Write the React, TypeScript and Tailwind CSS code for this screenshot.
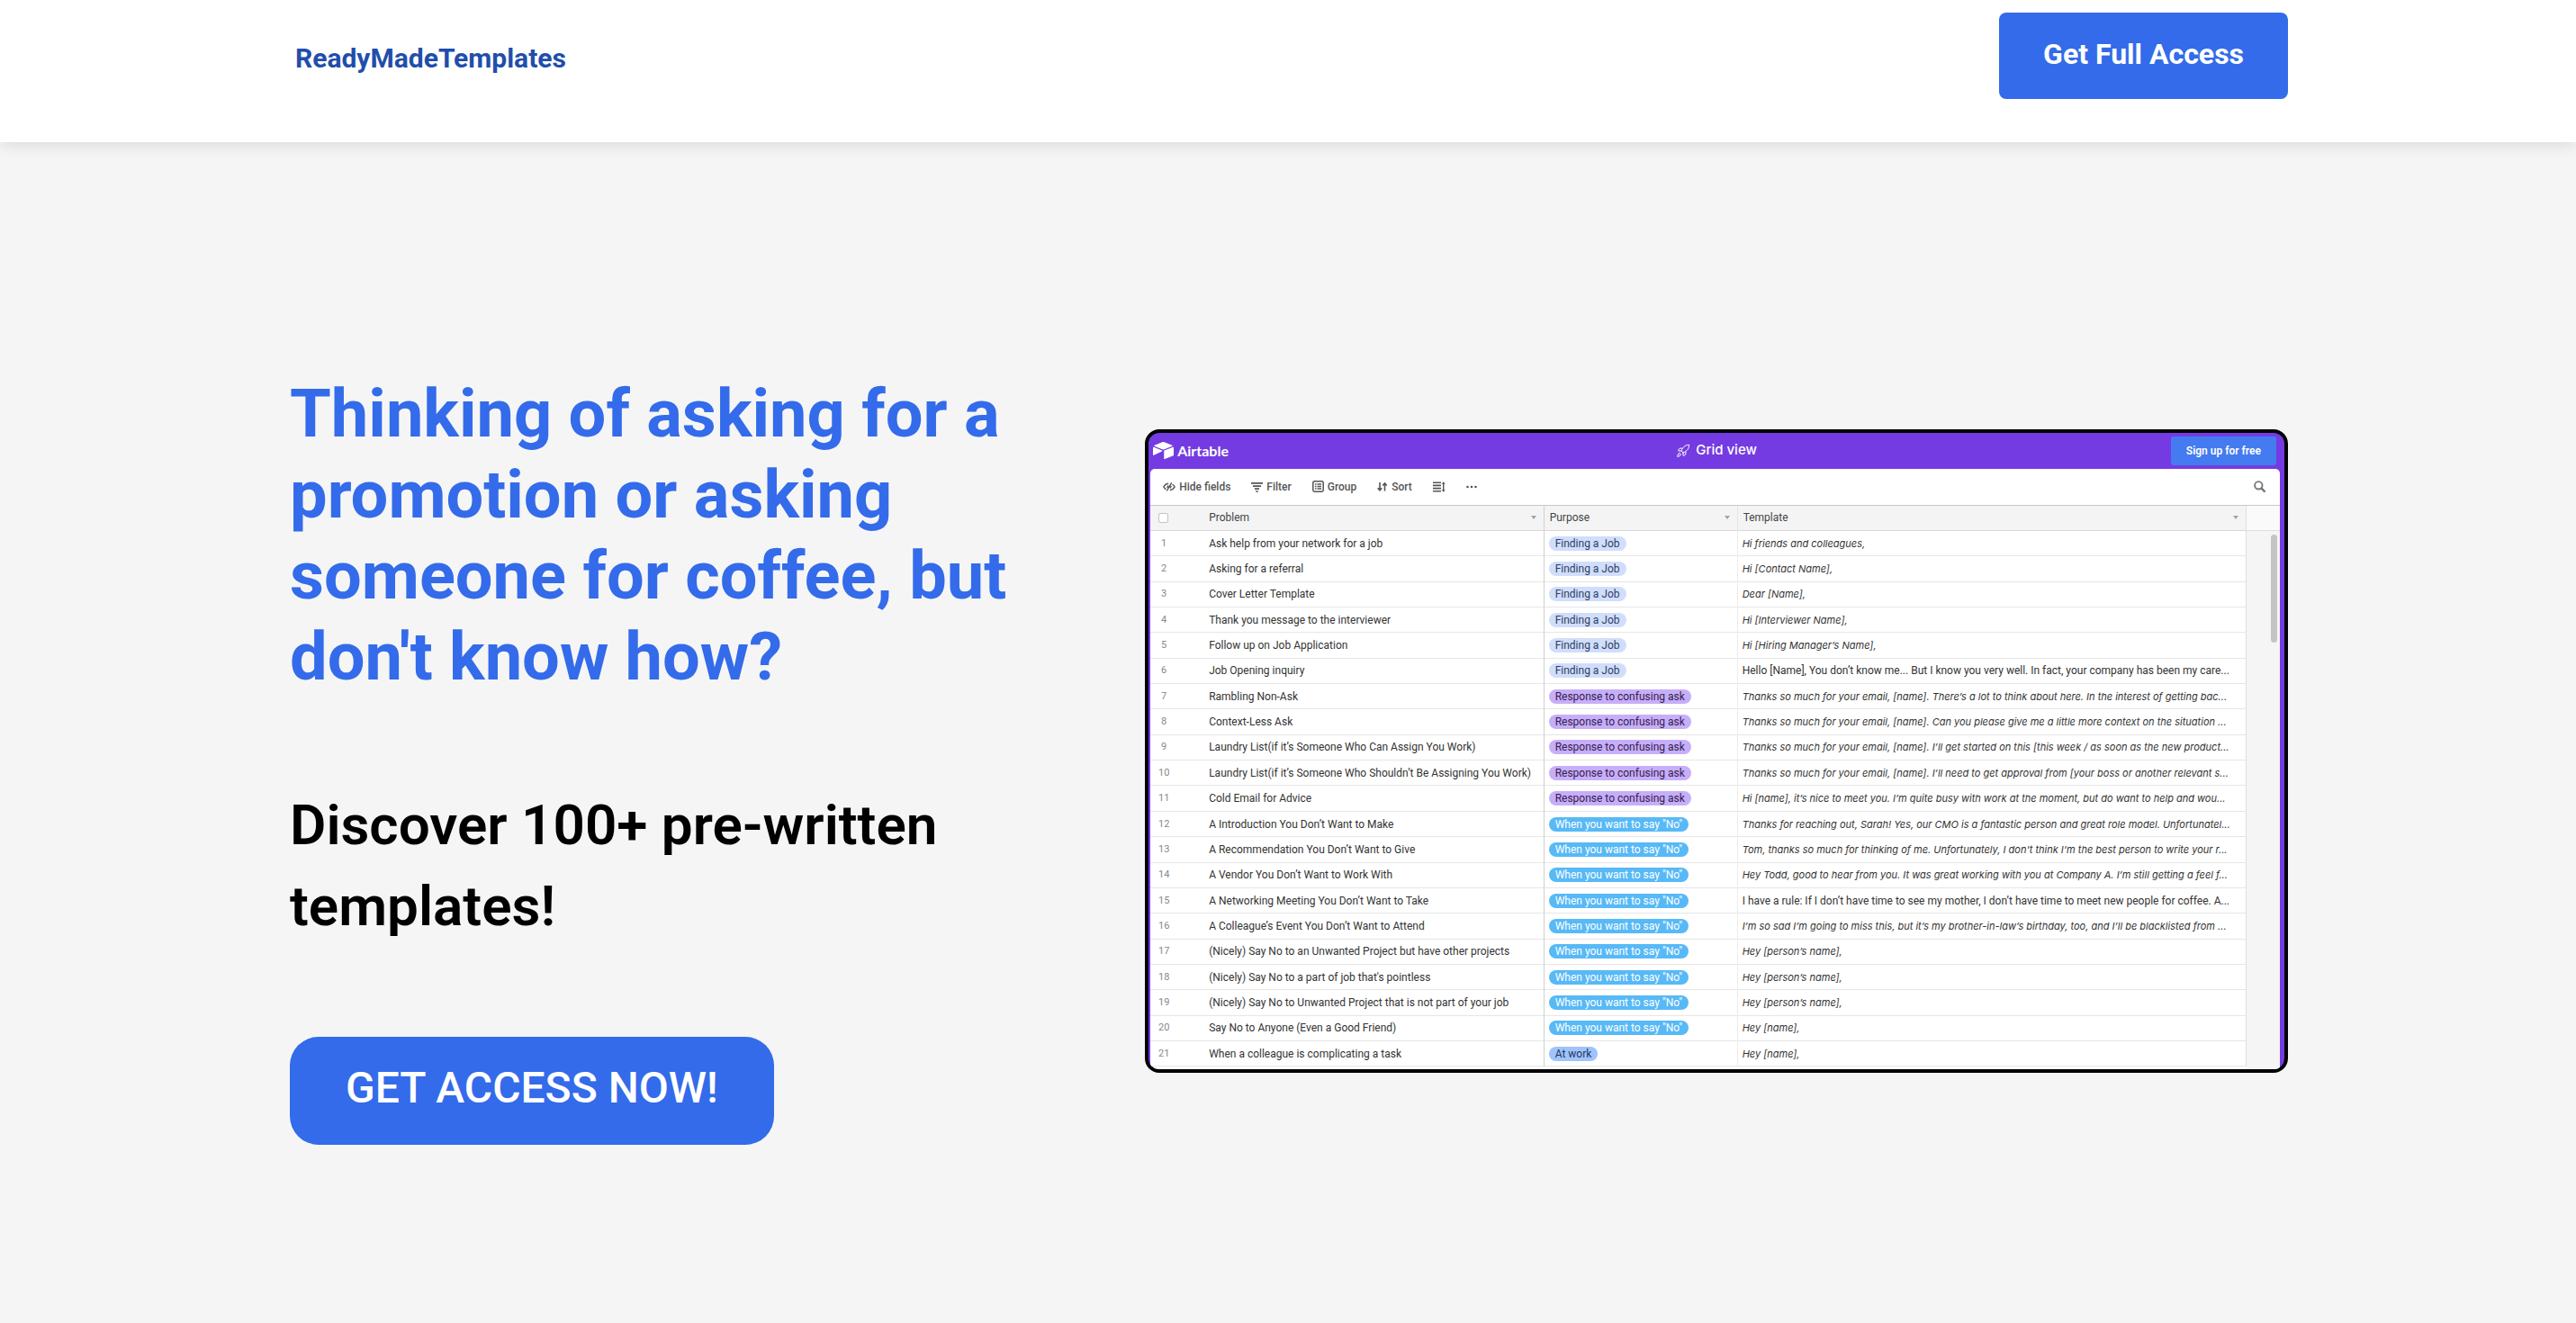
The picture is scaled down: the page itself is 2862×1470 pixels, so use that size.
import type { ReactNode } from 'react';
import { Rocket } from 'lucide-react';
import { SiAirtable } from 'react-icons/si';

type Purpose = 'job' | 'confusing' | 'no' | 'work';

interface TemplateRow {
  problem: string;
  purpose: Purpose;
  template: string;
  plain?: boolean;
}

const purposes: Record<Purpose, { label: string; className: string }> = {
  job: { label: 'Finding a Job', className: 'bg-[#d0defb] text-[#2f3d63]' },
  confusing: { label: 'Response to confusing ask', className: 'bg-[#c7aef9] text-[#33204f]' },
  no: { label: 'When you want to say "No"', className: 'bg-[#57b9f6] text-white' },
  work: { label: 'At work', className: 'bg-[#9fc3fb] text-[#26365c]' },
};

const rows: TemplateRow[] = [
  { problem: 'Ask help from your network for a job', purpose: 'job', template: 'Hi friends and colleagues,' },
  { problem: 'Asking for a referral', purpose: 'job', template: 'Hi [Contact Name],' },
  { problem: 'Cover Letter Template', purpose: 'job', template: 'Dear [Name],' },
  { problem: 'Thank you message to the interviewer', purpose: 'job', template: 'Hi [Interviewer Name],' },
  { problem: 'Follow up on Job Application', purpose: 'job', template: 'Hi [Hiring Manager’s Name],' },
  { problem: 'Job Opening inquiry', purpose: 'job', template: 'Hello [Name], You don’t know me... But I know you very well. In fact, your company has been my care...', plain: true },
  { problem: 'Rambling Non-Ask', purpose: 'confusing', template: 'Thanks so much for your email, [name]. There’s a lot to think about here. In the interest of getting bac...' },
  { problem: 'Context-Less Ask', purpose: 'confusing', template: 'Thanks so much for your email, [name]. Can you please give me a little more context on the situation ...' },
  { problem: 'Laundry List(if it’s Someone Who Can Assign You Work)', purpose: 'confusing', template: 'Thanks so much for your email, [name]. I’ll get started on this [this week / as soon as the new product...' },
  { problem: 'Laundry List(if it’s Someone Who Shouldn’t Be Assigning You Work)', purpose: 'confusing', template: 'Thanks so much for your email, [name]. I’ll need to get approval from [your boss or another relevant s...' },
  { problem: 'Cold Email for Advice', purpose: 'confusing', template: 'Hi [name], it’s nice to meet you. I’m quite busy with work at the moment, but do want to help and wou...' },
  { problem: 'A Introduction You Don’t Want to Make', purpose: 'no', template: 'Thanks for reaching out, Sarah! Yes, our CMO is a fantastic person and great role model. Unfortunatel...' },
  { problem: 'A Recommendation You Don’t Want to Give', purpose: 'no', template: "Tom, thanks so much for thinking of me. Unfortunately, I don't think I'm the best person to write your r..." },
  { problem: 'A Vendor You Don’t Want to Work With', purpose: 'no', template: 'Hey Todd, good to hear from you. It was great working with you at Company A. I’m still getting a feel f...' },
  { problem: 'A Networking Meeting You Don’t Want to Take', purpose: 'no', template: 'I have a rule: If I don’t have time to see my mother, I don’t have time to meet new people for coffee. A...', plain: true },
  { problem: 'A Colleague’s Event You Don’t Want to Attend', purpose: 'no', template: 'I’m so sad I’m going to miss this, but it’s my brother-in-law’s birthday, too, and I’ll be blacklisted from ...' },
  { problem: '(Nicely) Say No to an Unwanted Project but have other projects', purpose: 'no', template: 'Hey [person’s name],' },
  { problem: "(Nicely) Say No to a part of job that's pointless", purpose: 'no', template: 'Hey [person’s name],' },
  { problem: '(Nicely) Say No to Unwanted Project that is not part of your job', purpose: 'no', template: 'Hey [person’s name],' },
  { problem: 'Say No to Anyone (Even a Good Friend)', purpose: 'no', template: 'Hey [name],' },
  { problem: 'When a colleague is complicating a task', purpose: 'work', template: 'Hey [name],' },
];

function HideIcon() {
  return (
    <svg viewBox="0 0 14 12" className="h-3 w-3.5" fill="none" stroke="currentColor" strokeWidth="1.4" strokeLinecap="round">
      <path d="M5.6 2.300C3.500 2.700 1.800 4 .9 5.900c.5 1 1.200 1.800 2.100 2.400M8.400 9.500c2.100-.4 3.800-1.700 4.700-3.600-.5-1-1.200-1.800-2.100-2.400M9.400 1.800 4.600 10M5.800 4.900 4.900 6.400M9.100 5.400 8.200 6.900" />
    </svg>
  );
}

function FilterIcon() {
  return (
    <svg viewBox="0 0 13 12" className="h-3 w-[13px]" fill="none" stroke="currentColor" strokeWidth="1.7">
      <path d="M0 1.900h13M2 5.100h9M4 8.100h5M5.200 11h2.600" />
    </svg>
  );
}

function GroupIcon() {
  return (
    <svg viewBox="0 0 13 13" className="size-[13px]" fill="none" stroke="currentColor" strokeWidth="1.5">
      <rect x=".8" y=".8" width="11.4" height="11.4" rx="1.6" />
      <path d="M3 4h1.500M5.500 4H10M3 6.500h1.500M5.500 6.500H10M3 9h1.500M5.500 9H10" strokeWidth="1.3" />
    </svg>
  );
}

function SortIcon() {
  return (
    <svg viewBox="0 0 12 12" className="size-3" fill="none" stroke="currentColor" strokeWidth="1.6">
      <path d="M3 1v8.500M.7 7.200 3 9.700l2.300-2.500M8.500 10.500V2M6.200 4.500 8.500 2l2.300 2.500" />
    </svg>
  );
}

function RowHeightIcon() {
  return (
    <svg viewBox="0 0 14 12" className="h-3 w-3.5" fill="none" stroke="currentColor">
      <path d="M0 1.200h9M0 4.400h9M0 7.600h9M0 10.800h9" strokeWidth="1.6" />
      <path d="M11.700 2v8" strokeWidth="1.4" />
      <path d="M11.700.2 13.700 2.800H9.700ZM11.700 11.800 9.700 9.200h4Z" fill="currentColor" stroke="none" />
    </svg>
  );
}

function DotsIcon() {
  return (
    <svg viewBox="0 0 12 12" className="size-3" fill="currentColor">
      <circle cx="1.5" cy="6" r="1.3" />
      <circle cx="6" cy="6" r="1.3" />
      <circle cx="10.5" cy="6" r="1.3" />
    </svg>
  );
}

function SearchIcon() {
  return (
    <svg viewBox="0 0 13 13" className="size-[13px]" fill="none" stroke="currentColor">
      <circle cx="5.3" cy="5.3" r="4.2" strokeWidth="1.9" />
      <path d="m8.800 8.800 3 3" strokeWidth="2.4" strokeLinecap="round" />
    </svg>
  );
}

function ToolButton({ icon, label, children }: { icon: ReactNode; label?: string; children?: ReactNode }) {
  return (
    <button type="button" aria-label={label} className="flex items-center gap-1">
      {icon}
      {children}
    </button>
  );
}

function HeadCell({ children, className }: { children: ReactNode; className: string }) {
  return (
    <th scope="col" className={className}>
      <div className="flex items-center justify-between">
        {children}
        <svg viewBox="0 0 6 4" className="mr-2 h-1 w-1.5" fill="#a3a3a3">
          <path d="M0 0h6L3 4Z" />
        </svg>
      </div>
    </th>
  );
}

function TemplateTable() {
  return (
    <table className="h-full w-full table-fixed border-collapse text-left text-xs text-[#333]">
      <thead>
        <tr className="h-[28px] border-b border-[#d8d8d8] bg-[#f4f4f4] text-[#444]">
          <th scope="col" className="w-[58px] pl-[9px]">
            <input type="checkbox" aria-label="Select all rows" className="block size-[11px] appearance-none rounded-[2px] border border-[#c4c4c4] bg-white" />
          </th>
          <HeadCell className="w-[379px] border-r border-[#d0d0d0] pl-[7px] font-normal">Problem</HeadCell>
          <HeadCell className="w-[215px] border-r border-[#e4e4e4] pl-1.5 font-normal">Purpose</HeadCell>
          <HeadCell className="border-r border-[#dedede] pl-1.5 font-normal">Template</HeadCell>
        </tr>
      </thead>
      <tbody>
        {rows.map((row, i) => (
          <tr key={i} className="border-b border-[#e6e6e6]">
            <td className="p-0 text-[11px] leading-4 text-[#888]">
              <span className="block w-[30px] text-center">{i + 1}</span>
            </td>
            <td className="overflow-hidden border-r border-[#d0d0d0] p-0 pl-[7px] leading-4 whitespace-nowrap">{row.problem}</td>
            <td className="overflow-hidden border-r border-[#ececec] p-0 pl-[5px] leading-4 whitespace-nowrap">
              <span className={`block w-fit rounded-full px-[7px] ${purposes[row.purpose].className}`}>{purposes[row.purpose].label}</span>
            </td>
            <td className={`overflow-hidden border-r border-[#dedede] p-0 pl-[5px] leading-4 whitespace-nowrap ${row.plain ? '' : 'font-[Inter,sans-serif] text-[11px] italic'}`}>
              {row.template}
            </td>
          </tr>
        ))}
      </tbody>
    </table>
  );
}

function AirtablePreview() {
  return (
    <div className="flex aspect-[1270/716] flex-col overflow-hidden rounded-2xl border-4 border-black bg-[#743be2]">
      <div className="grid h-10 shrink-0 grid-cols-3 items-center text-white">
        <div className="flex items-center gap-1 pl-[5px]">
          <SiAirtable className="size-[23px]" />
          <span className="font-[Lato,sans-serif] text-base font-bold">Airtable</span>
        </div>
        <div className="flex items-center justify-center gap-1.5 font-[Inter,sans-serif] text-[15px] font-medium">
          <Rocket className="size-4" strokeWidth={1.5} />
          Grid view
        </div>
        <button type="button" className="mr-[9px] h-8 justify-self-end rounded-[3px] bg-[#447bf0] px-[17px] text-xs font-semibold">
          Sign up for free
        </button>
      </div>
      <div className="mr-[5px] ml-0.5 flex min-h-0 flex-1 flex-col overflow-hidden rounded-t-[5px] bg-white">
        <div className="flex h-[41px] shrink-0 items-center gap-[23px] border-b border-[#c8c8c8] pr-4 pl-3.5 text-xs font-medium text-[#555]">
          <ToolButton icon={<HideIcon />}>Hide fields</ToolButton>
          <ToolButton icon={<FilterIcon />}>Filter</ToolButton>
          <ToolButton icon={<GroupIcon />}>Group</ToolButton>
          <ToolButton icon={<SortIcon />}>Sort</ToolButton>
          <ToolButton icon={<RowHeightIcon />} label="Row height" />
          <ToolButton icon={<DotsIcon />} label="More options" />
          <button type="button" aria-label="Search" className="ml-auto text-[#777]">
            <SearchIcon />
          </button>
        </div>
        <div className="grid min-h-0 flex-1 grid-cols-[1fr_37px] pb-[3px]">
          <TemplateTable />
          <div className="-mb-[3px] flex flex-col items-end bg-[#f5f5f5]">
            <div className="h-[28px] w-full border-b border-[#dedede] bg-[#fafafa]" />
            <div className="mt-1 mr-[3px] h-[120px] w-[7px] rounded-full bg-[#c4c4c4]" />
          </div>
        </div>
      </div>
    </div>
  );
}

export default function App() {
  return (
    <div className="min-h-screen bg-[#f5f5f5] font-[Roboto,sans-serif]">
      <header className="relative bg-white shadow-[0_0_20px_rgba(0,0,0,0.15)]">
        <div className="mx-auto flex max-w-[2222px] items-start justify-between pt-3.5 pb-12 pl-0.5">
          <a href="#" className="mt-[31px] ml-1.5 text-[30px] leading-10 font-bold text-[#1f4eac]">
            ReadyMadeTemplates
          </a>
          <button type="button" className="h-24 rounded-lg bg-[#336bea] px-[49px] pb-1 text-[32px] font-bold text-white">
            Get Full Access
          </button>
        </div>
      </header>
      <main className="mx-auto grid max-w-[2222px] grid-cols-[42.8%_57.2%] items-center pt-[239px] pl-0.5">
        <section className="pt-[18px] pr-20">
          <h1 className="text-[74px] leading-[90px] font-bold text-[#336bea]">
            Thinking of asking for a promotion or asking someone for coffee, but don't know how?
          </h1>
          <h2 className="mt-[97px] text-[62px] leading-[90px] font-semibold text-black">Discover 100+ pre-written templates!</h2>
          <button type="button" className="mt-[100px] h-[120px] rounded-[32px] bg-[#336bea] px-[62px] pb-1.5 text-[48px] font-medium text-white">
            GET ACCESS NOW!
          </button>
        </section>
        <AirtablePreview />
      </main>
    </div>
  );
}
